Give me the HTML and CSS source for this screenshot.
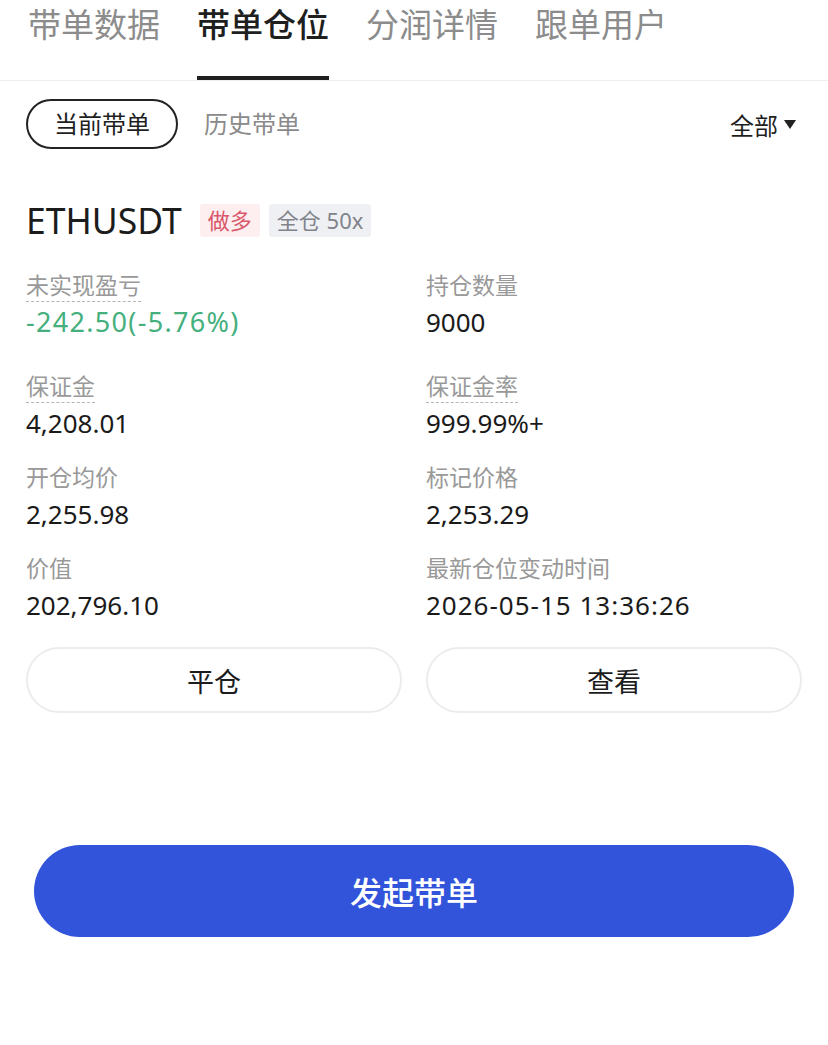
FILE: index.html
```html
<!DOCTYPE html>
<html lang="zh-CN">
<head>
    <meta charset="UTF-8">
    <meta name="viewport" content="width=device-width, initial-scale=1.0">
    <title>带单仓位</title>
    <link rel="stylesheet" href="styles.css">
</head>
<body>
    <header class="tabs">
        <a class="tab" href="#">带单数据</a>
        <a class="tab active" href="#">带单仓位</a>
        <a class="tab" href="#">分润详情</a>
        <a class="tab" href="#">跟单用户</a>
    </header>

    <div class="filters">
        <div class="filter-left">
            <span class="pill active">当前带单</span>
            <span class="pill">历史带单</span>
        </div>
        <div class="filter-all">全部 <span class="caret"></span></div>
    </div>

    <div class="position">
        <div class="title-row">
            <span class="symbol">ETHUSDT</span>
            <span class="badge long">做多</span>
            <span class="badge mode">全仓 50x</span>
        </div>

        <div class="stats">
            <div class="stat first">
                <div class="label"><span class="dotted">未实现盈亏</span></div>
                <div class="value green">-242.50(-5.76%)</div>
            </div>
            <div class="stat first">
                <div class="label">持仓数量</div>
                <div class="value">9000</div>
            </div>
            <div class="stat">
                <div class="label"><span class="dotted">保证金</span></div>
                <div class="value">4,208.01</div>
            </div>
            <div class="stat">
                <div class="label"><span class="dotted">保证金率</span></div>
                <div class="value">999.99%+</div>
            </div>
            <div class="stat">
                <div class="label">开仓均价</div>
                <div class="value">2,255.98</div>
            </div>
            <div class="stat">
                <div class="label">标记价格</div>
                <div class="value">2,253.29</div>
            </div>
            <div class="stat">
                <div class="label">价值</div>
                <div class="value">202,796.10</div>
            </div>
            <div class="stat">
                <div class="label">最新仓位变动时间</div>
                <div class="value date">2026-05-15 13:36:26</div>
            </div>
        </div>

        <div class="actions">
            <button class="btn">平仓</button>
            <button class="btn">查看</button>
        </div>
    </div>

    <div class="footer">
        <button class="btn-primary">发起带单</button>
    </div>
</body>
</html>
```

FILE: styles.css
```css
* {
    margin: 0;
    padding: 0;
    box-sizing: border-box;
}

body {
    font-family: "Noto Sans", "Noto Sans CJK SC", sans-serif;
    background-color: #fff;
    color: #1c1c1c;
}

/* Abas do topo */
.tabs {
    display: flex;
    gap: 37px;
    padding: 0 28px;
    border-bottom: 1px solid #efefef;
}

.tab {
    display: block;
    height: 80px;
    padding-top: 7px;
    font-size: 33px;
    line-height: 36px;
    color: #8c8c8c;
    text-decoration: none;
    border-bottom: 4px solid transparent;
}

.tab.active {
    color: #1f1f1f;
    font-weight: 500;
    border-bottom-color: #1f1f1f;
}

/* Filtros */
.filters {
    display: flex;
    justify-content: space-between;
    align-items: center;
    padding: 18px 32px 0 26px;
}

.filter-left {
    display: flex;
    align-items: center;
    gap: 26px;
}

.pill {
    font-size: 24px;
    line-height: 46px;
    color: #8a8a8a;
}

.pill.active {
    height: 50px;
    padding: 0 26px;
    border: 2px solid #222;
    border-radius: 25px;
    color: #1f1f1f;
}

.filter-all {
    display: flex;
    align-items: center;
    gap: 6px;
    font-size: 24px;
    color: #1f1f1f;
}

.caret {
    width: 0;
    height: 0;
    border-left: 6px solid transparent;
    border-right: 6px solid transparent;
    border-top: 9px solid #222;
}

/* Posição */
.position {
    padding: 0 26px;
}

.title-row {
    display: flex;
    align-items: center;
    gap: 9px;
    margin-top: 51px;
    height: 40px;
}

.symbol {
    font-size: 35.5px;
    color: #1c1c1c;
    margin-right: 9px;
}

.badge {
    font-size: 22px;
    line-height: 33px;
    padding: 0 8px;
    border-radius: 3px;
}

.badge.long {
    background-color: #fdeff0;
    color: #d9566b;
}

.badge.mode {
    background-color: #eff0f4;
    color: #80838a;
}

.stats {
    display: grid;
    grid-template-columns: 1fr 1fr;
    column-gap: 24px;
    row-gap: 17px;
    margin-top: 28px;
}

.stat.first {
    margin-bottom: 10px;
}

.label {
    font-size: 23px;
    line-height: 34px;
    color: #999;
}

.dotted {
    border-bottom: 1.5px dashed #b5b5b5;
}

.value {
    font-size: 26px;
    line-height: 40px;
    color: #1a1a1a;
}

.value.green {
    font-size: 27px;
    color: #45b07d;
    letter-spacing: 1.3px;
}

.value.date {
    letter-spacing: 1px;
}

.actions {
    display: grid;
    grid-template-columns: 1fr 1fr;
    gap: 24px;
    margin-top: 22px;
}

.btn {
    height: 66px;
    border: 2px solid #ececec;
    border-radius: 33px;
    background-color: #fff;
    font-family: inherit;
    font-size: 27px;
    color: #1c1c1c;
}

/* Botão principal */
.footer {
    padding: 132px 34px 0;
}

.btn-primary {
    display: block;
    width: 100%;
    height: 92px;
    border: none;
    border-radius: 46px;
    background-color: #3154db;
    color: #fff;
    font-family: inherit;
    font-size: 32px;
    font-weight: 500;
}
```
